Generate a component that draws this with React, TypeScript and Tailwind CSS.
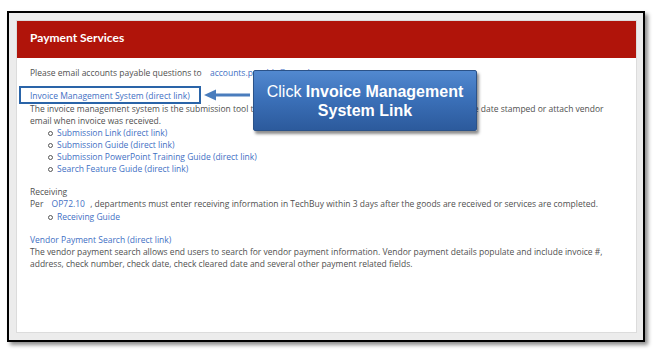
import React from "react";

const link = "text-[#3f70c4]";

function Bullet({ children }: { children: React.ReactNode }) {
  return (
    <li className="flex items-center h-[12px]">
      <span className="w-[5px] h-[5px] rounded-full border border-[#555] mr-[4px] shrink-0"></span>
      <span className={link}>{children}</span>
    </li>
  );
}

export default function App() {
  return (
    <div className="w-[657px] h-[351px] bg-white relative overflow-hidden" style={{ fontFamily: '"Open Sans", "Noto Sans", sans-serif' }}>
      <div className="absolute left-[7px] top-[11px] w-[638px] h-[331px] border-2 border-black bg-[#ececec] p-[7px] pr-[6px] shadow-[3px_3px_4px_rgba(0,0,0,0.45)]">
        <div className="w-[621px] h-[313px] bg-white border border-[#dcdcdc] flex flex-col">
          <div className="h-[37px] bg-[#b0140a] flex items-center px-[13px] pb-[3px] shrink-0">
            <span className="text-white text-[12px] font-bold" style={{ fontFamily: 'Lato, "Open Sans", sans-serif' }}>Payment Services</span>
          </div>
          <div className="relative pl-[13px] pt-[9px] text-[8.5px] leading-[12px] text-[#505050]">
            <div className="h-[12px]">
              Please email accounts payable questions to <span className={`${link} ml-[6px]`}>accounts.payable@ttu.edu</span>
            </div>
            <div className="mt-[11px] h-[12px]">
              <span className={`${link} relative`}>
                Invoice Management System (direct link)
                <span className="absolute -left-[11px] -top-[4px] w-[182px] h-[18px] border-2 border-[#2a64a8]"></span>
              </span>
            </div>
            <div className="w-[578px] mt-[1px]">
              The invoice management system is the submission tool to send invoices to Accounts Payable. All invoices must be date stamped or attach vendor email when invoice was received.
            </div>
            <ul className="pl-[18px]">
              <Bullet>Submission Link (direct link)</Bullet>
              <Bullet>Submission Guide (direct link)</Bullet>
              <Bullet>Submission PowerPoint Training Guide (direct link)</Bullet>
              <Bullet>Search Feature Guide (direct link)</Bullet>
            </ul>
            <div className="mt-[11px]">Receiving</div>
            <div>
              Per <span className={`${link} ml-[6px] mr-[3px]`}>OP72.10</span> , departments must enter receiving information in TechBuy within 3 days after the goods are received or services are completed.
            </div>
            <ul className="pl-[18px] mt-[1px]">
              <Bullet>Receiving Guide</Bullet>
            </ul>
            <div className={`${link} mt-[11px]`}>Vendor Payment Search (direct link)</div>
            <div className="w-[585px]">
              The vendor payment search allows end users to search for vendor payment information. Vendor payment details populate and include invoice #, address, check number, check date, check cleared date and several other payment related fields.
            </div>
          </div>
        </div>
      </div>

      {/* arrow */}
      <svg className="absolute left-[203px] top-[89px]" width="48" height="12" viewBox="0 0 48 12">
        <line x1="12" y1="6" x2="47" y2="6" stroke="#4a7dbd" strokeWidth="3" />
        <polygon points="1,6 13,0.5 13,11.5" fill="#4a7dbd" />
      </svg>

      {/* callout */}
      <div className="absolute left-[253px] top-[70px] w-[224px] h-[61px] rounded-[2px] border border-[#2b5288] bg-gradient-to-b from-[#5289d0] via-[#3a6fb7] to-[#2c5a9c] shadow-[2px_3px_3px_rgba(0,0,0,0.45)] flex flex-col items-center justify-center text-white text-[16px] leading-[19px]" style={{ fontFamily: '"Liberation Sans", Arial, sans-serif' }}>
        <div>Click <span className="font-bold">Invoice Management</span></div>
        <div className="font-bold">System Link</div>
      </div>
    </div>
  );
}
